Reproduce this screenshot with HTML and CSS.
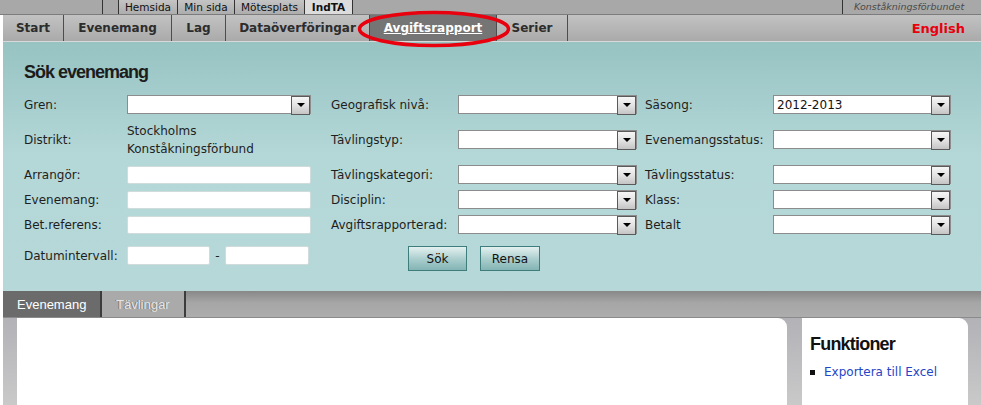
FILE: index.html
```html
<!DOCTYPE html>
<html lang="sv">
<head>
    <meta charset="UTF-8">
    <title>IndTA - Avgiftsrapport</title>
    <link rel="stylesheet" href="styles.css">
</head>
<body>
    <div class="topbar">
        <div class="top-blank"></div>
        <div class="top-spacer"></div>
        <a class="top-tab t-home">Hemsida</a>
        <a class="top-tab t-mine">Min sida</a>
        <a class="top-tab t-meet">Mötesplats</a>
        <a class="top-tab t-indta active">IndTA</a>
        <div class="top-fill"></div>
        <div class="org">Konståkningsförbundet</div>
    </div>

    <div class="page">
        <nav class="mainnav">
            <a class="nav-item n-start">Start</a>
            <a class="nav-item n-events">Evenemang</a>
            <a class="nav-item n-team">Lag</a>
            <a class="nav-item n-data">Dataöverföringar</a>
            <a class="nav-item n-fees active">Avgiftsrapport</a>
            <a class="nav-item n-series">Serier</a>
            <a class="lang">English</a>
        </nav>

        <!-- marking round the active menu item -->
        <svg class="highlight" width="154" height="38" viewBox="0 0 154 38">
            <ellipse cx="77" cy="19" rx="74.5" ry="16.5" fill="none" stroke="#e8000e" stroke-width="3.5"/>
        </svg>

        <section class="search">
            <h2>Sök evenemang</h2>
            <div class="form-grid">
                <label>Gren:</label>
                <div class="field"><span class="sel"><select class="w184"></select></span></div>
                <label>Geografisk nivå:</label>
                <div class="field"><span class="sel"><select class="w179"></select></span></div>
                <label>Säsong:</label>
                <div class="field"><span class="sel"><select class="w178"><option>2012-2013</option></select></span></div>

                <label>Distrikt:</label>
                <div class="field static">Stockholms<br>Konståkningsförbund</div>
                <label>Tävlingstyp:</label>
                <div class="field"><span class="sel"><select class="w179"></select></span></div>
                <label>Evenemangsstatus:</label>
                <div class="field"><span class="sel"><select class="w178"></select></span></div>

                <label>Arrangör:</label>
                <div class="field"><input type="text" class="w184"></div>
                <label>Tävlingskategori:</label>
                <div class="field"><span class="sel"><select class="w179"></select></span></div>
                <label>Tävlingsstatus:</label>
                <div class="field"><span class="sel"><select class="w178"></select></span></div>

                <label>Evenemang:</label>
                <div class="field"><input type="text" class="w184"></div>
                <label>Disciplin:</label>
                <div class="field"><span class="sel"><select class="w179"></select></span></div>
                <label>Klass:</label>
                <div class="field"><span class="sel"><select class="w178"></select></span></div>

                <label>Bet.referens:</label>
                <div class="field"><input type="text" class="w184"></div>
                <label>Avgiftsrapporterad:</label>
                <div class="field"><span class="sel"><select class="w179"></select></span></div>
                <label>Betalt</label>
                <div class="field"><span class="sel"><select class="w178"></select></span></div>

                <label class="last">Datumintervall:</label>
                <div class="field last dates">
                    <input type="text" class="w83">
                    <span class="dash">-</span>
                    <input type="text" class="w84">
                </div>
                <div class="buttons last">
                    <button class="btn">Sök</button>
                    <button class="btn">Rensa</button>
                </div>
            </div>
        </section>

        <div class="subtabs">
            <a class="subtab active">Evenemang</a>
            <a class="subtab disabled">Tävlingar</a>
        </div>

        <div class="content">
            <div class="main-box"></div>
            <aside class="side-box">
                <h3>Funktioner</h3>
                <ul>
                    <li><a href="#">Exportera till Excel</a></li>
                </ul>
            </aside>
        </div>
    </div>
</body>
</html>
```

FILE: styles.css
```css
* {
    box-sizing: border-box;
}

body {
    margin: 0;
    background-color: #fff;
    font-family: 'DejaVu Sans', Verdana, sans-serif;
    font-size: 12px;
    color: #222;
    overflow: hidden;
}

a {
    text-decoration: none;
    cursor: pointer;
}

/* Top strip with site links */
.topbar {
    display: flex;
    height: 15px;
    background-color: #a8a8a8;
    border-bottom: 1px solid #7c7c7c;
    font-size: 10.5px;
}

.top-blank {
    width: 103px;
    border-right: 1px solid #333;
}

.top-spacer {
    width: 16px;
    border-right: 1px solid #333;
}

.top-tab {
    line-height: 14px;
    text-align: center;
    color: #111;
    background: linear-gradient(#c4c4c4, #adadad);
    border-right: 1px solid #333;
}

.top-tab.active {
    background: #dcdcdc;
    font-weight: bold;
}

.t-home { width: 59px; }
.t-mine { width: 57px; }
.t-meet { width: 70px; }
.t-indta { width: 48px; }

.top-fill {
    width: 490px;
    border-right: 1px solid #333;
}

.org {
    padding-left: 11px;
    font-style: italic;
    font-size: 9.5px;
    color: #4a4a4a;
    line-height: 14px;
    white-space: nowrap;
}

.page {
    position: relative;
    margin-left: 3px;
}

/* Main menu */
.mainnav {
    display: flex;
    height: 27px;
    background: linear-gradient(#c2c2c2, #aaaaaa);
    border-bottom: 1px solid #d8d8d8;
    font-weight: bold;
    font-size: 12px;
}

.nav-item {
    display: flex;
    align-items: center;
    justify-content: center;
    color: #2c2c2c;
    border-right: 1px solid #4d4d4d;
}

.n-start { width: 61px; }
.n-events { width: 108px; }
.n-team { width: 54px; }
.n-data { width: 144px; }
.n-fees { width: 127px; }
.n-series { width: 71px; }

.nav-item.active {
    background: #757575;
    color: #fff;
    text-decoration: underline;
}

.lang {
    margin-left: auto;
    padding-right: 16px;
    align-self: center;
    color: #e8000e;
    font-size: 13px;
}

.highlight {
    position: absolute;
    left: 354px;
    top: -5px;
}

/* Search panel */
.search {
    height: 249px;
    padding: 19px 0 0 21px;
    background: linear-gradient(#97c3c3, #b4d7d7 45%, #b6d8d8);
}

.search h2 {
    margin: 0 0 12px;
    font-family: 'Liberation Sans', Arial, sans-serif;
    font-size: 18px;
    line-height: 22px;
    letter-spacing: -1px;
    color: #1c1c1c;
}

.form-grid {
    display: grid;
    grid-template-columns: 103px 204px 127px 187px 128px 178px;
    grid-template-rows: 19px 39px 19px 19px 19px 25px;
    row-gap: 6px;
    align-items: center;
}

.form-grid label {
    color: #1e1e1e;
}

.field {
    display: flex;
    align-items: center;
}

.static {
    line-height: 18px;
    align-self: start;
    margin-top: 2px;
}

.last {
    margin-top: 6px;
}

select,
input[type="text"] {
    height: 19px;
    margin: 0;
    font-family: 'DejaVu Sans', Verdana, sans-serif;
    font-size: 12px;
    background-color: #fff;
}

select {
    display: block;
    border: 1px solid #8c8c8c;
    border-radius: 0;
    padding: 0 0 0 3px;
    appearance: none;
    color: #111;
}

/* dropdown button drawn over the right end of the select */
.sel {
    position: relative;
    display: block;
}

.sel::after {
    content: "";
    position: absolute;
    right: 1px;
    top: 1px;
    width: 17px;
    height: 17px;
    border: 1px solid #5a5a5a;
    background: linear-gradient(#f6f6f6, #e2e2e2 50%, #c4c4c4);
    pointer-events: none;
}

.sel::before {
    content: "";
    position: absolute;
    right: 6px;
    top: 8px;
    border-left: 4px solid transparent;
    border-right: 4px solid transparent;
    border-top: 4px solid #000;
    z-index: 1;
    pointer-events: none;
}

input[type="text"] {
    height: 18px;
    border: 1px solid #d0dcdc;
    border-radius: 2px;
    padding: 0 3px;
}

.w184 { width: 184px; }
.w179 { width: 179px; }
.w178 { width: 178px; }
.w83 { width: 83px; }
.w84 { width: 84px; }

.dates input[type="text"] {
    height: 19px;
}

.dash {
    width: 15px;
    text-align: center;
}

.buttons {
    grid-column: 3 / 5;
    display: flex;
    gap: 13px;
    padding-left: 77px;
    align-self: start;
}

.btn {
    height: 25px;
    width: 59px;
    border: 1px solid #3f7d7d;
    background: linear-gradient(#e4f0f0, #a8cccc 55%, #84b4b4);
    font-family: 'DejaVu Sans', Verdana, sans-serif;
    font-size: 12px;
    color: #111;
    padding: 0;
}

.btn + .btn {
    width: 60px;
}

/* Tabs below the search */
.subtabs {
    display: flex;
    height: 27px;
    background: linear-gradient(#888, #a6a6a6 45%, #adadad);
    border-bottom: 1px solid #8a8a8a;
}

.subtab {
    display: flex;
    align-items: center;
    padding: 0 14px;
    color: #fff;
    border-right: 2px solid #3c3c3c;
    font-family: 'Liberation Sans', Arial, sans-serif;
    font-size: 13px;
}

.subtab.active {
    width: 99px;
    background: #6b6b6b;
}

.subtab.disabled {
    width: 84px;
    background: #aaa;
    color: #e4e4e4;
    text-shadow: -1px 0 0 #777;
}

/* Content area */
.content {
    display: flex;
    height: 90px;
    padding-left: 14px;
    gap: 15px;
    background: linear-gradient(#b2b2b7, #cacaca);
}

.main-box {
    width: 770px;
    background: #fff;
    border-top-right-radius: 9px;
}

.side-box {
    width: 166px;
    background: #fff;
    border-top-right-radius: 9px;
    padding: 16px 8px;
}

.side-box h3 {
    margin: 0 0 10px;
    font-family: 'Liberation Sans', Arial, sans-serif;
    font-size: 18px;
    letter-spacing: -0.8px;
    color: #111;
}

.side-box ul {
    margin: 0;
    padding: 0;
    list-style: none;
}

.side-box li {
    display: flex;
    align-items: center;
}

.side-box li::before {
    content: "";
    width: 5px;
    height: 5px;
    margin: 0 9px 0 0;
    background: #111;
}

.side-box li a {
    color: #2445c8;
    font-size: 12px;
}
```
